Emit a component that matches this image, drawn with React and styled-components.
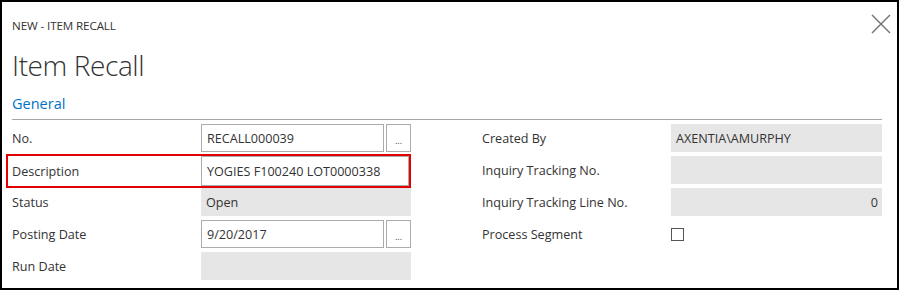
import styled, { createGlobalStyle } from "styled-components";

const GlobalStyle = createGlobalStyle`
  body {
    margin: 0;
    font-family: "Open Sans", "Noto Sans", "Liberation Sans", sans-serif;
    color: #333;
    background: #fff;
  }
`;

const Frame = styled.div`
  width: 899px;
  height: 290px;
  box-sizing: border-box;
  border: 2px solid #000;
  padding: 0 15px 0 10px;
  overflow: hidden;
  background: #fff;
`;

const TopBar = styled.div`
  display: flex;
  justify-content: space-between;
  align-items: flex-start;
  height: 46px;
`;

const Caption = styled.div`
  margin-top: 16px;
  font-size: 11.6px;
  line-height: 16px;
  color: #333;
  letter-spacing: -0.1px;
`;

const CloseButton = styled.button`
  margin: 12px -9px 0 0;
  width: 20px;
  height: 20px;
  padding: 0;
  border: none;
  background: none;
  display: flex;
`;

const Title = styled.h1`
  margin: 0;
  font-size: 28px;
  font-weight: 300;
  line-height: 34px;
  color: #333;
  letter-spacing: -0.4px;
`;

const Section = styled.div`
  margin-top: 12px;
  border-bottom: 1px solid #a6a6a6;
  padding-bottom: 5px;
  font-size: 14.5px;
  line-height: 20px;
  color: #0072c6;
`;

const Columns = styled.div`
  display: grid;
  grid-template-columns: 399px 400px;
  column-gap: 71px;
  margin-top: 4px;
`;

const Column = styled.div`
  display: flex;
  flex-direction: column;
  gap: 4px;
`;

const Row = styled.div`
  position: relative;
  display: grid;
  grid-template-columns: 189px 1fr;
  align-items: center;
  height: 28px;
  font-size: 12.6px;

  ${(p) =>
    p.$highlight &&
    `
    &::after {
      content: "";
      position: absolute;
      left: -6px;
      right: 0;
      top: -2px;
      bottom: -4px;
      border: 2px solid #e30000;
      pointer-events: none;
    }
  `}
`;

const Label = styled.span`
  color: #333;
`;

const Field = styled.div`
  display: flex;
  gap: 2px;
  align-items: ${(p) => (p.$center ? "center" : "stretch")};
  height: ${(p) => (p.$tall ? "30px" : "28px")};
  align-self: ${(p) => (p.$tall ? "start" : "center")};
  margin-right: ${(p) => (p.$tall ? "2px" : "0")};
`;

const Input = styled.div`
  flex: 1;
  box-sizing: border-box;
  border: 1px solid #ababab;
  padding: 0 5px;
  display: flex;
  align-items: center;
  color: #333;
`;

const ReadOnly = styled.div`
  flex: 1;
  box-sizing: border-box;
  background: #e6e6e6;
  padding: 0 4px 0 5px;
  display: flex;
  align-items: center;
  justify-content: ${(p) => (p.$right ? "flex-end" : "flex-start")};
  color: #333;
`;

const Lookup = styled.div`
  width: 25px;
  box-sizing: border-box;
  border: 1px solid #ababab;
  display: flex;
  align-items: center;
  justify-content: center;
  font-size: 9px;
  padding-top: 4px;
  color: #444;
`;

const CheckBox = styled.div`
  width: 13px;
  height: 13px;
  box-sizing: border-box;
  border: 1px solid #555;
  background: #fff;
`;

const leftRows = [
  { label: "No.", value: "RECALL000039", kind: "lookup" },
  { label: "Description", value: "YOGIES F100240 LOT0000338", kind: "input", highlight: true },
  { label: "Status", value: "Open", kind: "readonly" },
  { label: "Posting Date", value: "9/20/2017", kind: "lookup" },
  { label: "Run Date", value: "", kind: "readonly" },
];

const rightRows = [
  { label: "Created By", value: "AXENTIA\\AMURPHY", kind: "readonly" },
  { label: "Inquiry Tracking No.", value: "", kind: "readonly" },
  { label: "Inquiry Tracking Line No.", value: "0", kind: "readonly", right: true },
  { label: "Process Segment", kind: "check" },
];

function FieldFor({ row }) {
  if (row.kind === "check") {
    return (
      <Field $center>
        <CheckBox />
      </Field>
    );
  }
  if (row.kind === "readonly") {
    return (
      <Field>
        <ReadOnly $right={row.right}>{row.value}</ReadOnly>
      </Field>
    );
  }
  return (
    <Field $tall={row.highlight}>
      <Input>{row.value}</Input>
      {row.kind === "lookup" && <Lookup>...</Lookup>}
    </Field>
  );
}

function App() {
  return (
    <>
      <GlobalStyle />
      <Frame>
        <TopBar>
          <Caption>NEW - ITEM RECALL</Caption>
          <CloseButton aria-label="Close">
            <svg width="20" height="20" viewBox="0 0 20 20">
              <path d="M1 1 L19 19 M19 1 L1 19" stroke="#707070" strokeWidth="1.4" fill="none" />
            </svg>
          </CloseButton>
        </TopBar>
        <Title>Item Recall</Title>
        <Section>General</Section>
        <Columns>
          <Column>
            {leftRows.map((r) => (
              <Row key={r.label} $highlight={r.highlight}>
                <Label>{r.label}</Label>
                <FieldFor row={r} />
              </Row>
            ))}
          </Column>
          <Column>
            {rightRows.map((r) => (
              <Row key={r.label}>
                <Label>{r.label}</Label>
                <FieldFor row={r} />
              </Row>
            ))}
          </Column>
        </Columns>
      </Frame>
    </>
  );
}

export default App;
